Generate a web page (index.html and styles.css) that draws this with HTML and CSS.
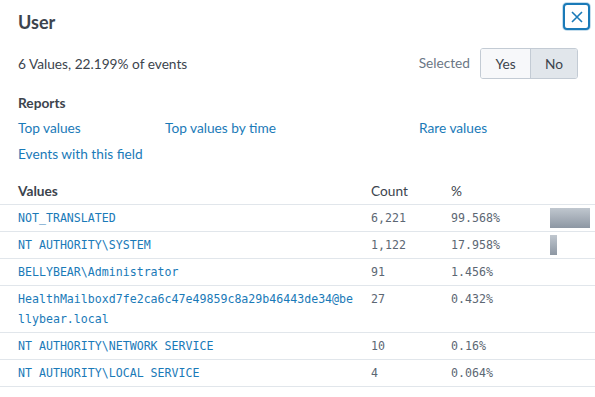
FILE: index.html
```html
<!DOCTYPE html>
<html lang="en">
<head>
  <meta charset="UTF-8">
  <title>User</title>
  <link rel="stylesheet" href="styles.css">
</head>
<body>

  <div class="head">
    <h2 class="title">User</h2>
    <button class="close-btn" aria-label="Close">
      <svg width="12" height="12" viewBox="0 0 12 12">
        <path d="M1 1 L11 11 M11 1 L1 11" stroke="#1a7ab8" stroke-width="1.6" fill="none"/>
      </svg>
    </button>
  </div>

  <div class="summary">
    <div class="summary-text">6 Values, 22.199% of events</div>
    <div class="selected">
      <span class="selected-label">Selected</span>
      <div class="toggle">
        <button class="toggle-btn">Yes</button>
        <button class="toggle-btn on">No</button>
      </div>
    </div>
  </div>

  <h3 class="section">Reports</h3>
  <div class="reports">
    <a href="#">Top values</a>
    <a href="#">Top values by time</a>
    <a href="#">Rare values</a>
    <a href="#">Events with this field</a>
  </div>

  <table class="values">
    <thead>
      <tr>
        <th class="col-val">Values</th>
        <th class="col-count">Count</th>
        <th class="col-pct">%</th>
        <th class="col-bar"></th>
      </tr>
    </thead>
    <tbody>
      <tr>
        <td class="val">NOT_TRANSLATED</td>
        <td class="num">6,221</td>
        <td class="num">99.568%</td>
        <td class="bar-cell"><div class="bar" style="width: 40px;"></div></td>
      </tr>
      <tr>
        <td class="val">NT AUTHORITY\SYSTEM</td>
        <td class="num">1,122</td>
        <td class="num">17.958%</td>
        <td class="bar-cell"><div class="bar" style="width: 7px;"></div></td>
      </tr>
      <tr>
        <td class="val">BELLYBEAR\Administrator</td>
        <td class="num">91</td>
        <td class="num">1.456%</td>
        <td class="bar-cell"></td>
      </tr>
      <tr>
        <td class="val">HealthMailboxd7fe2ca6c47e49859c8a29b46443de34@bellybear.local</td>
        <td class="num">27</td>
        <td class="num">0.432%</td>
        <td class="bar-cell"></td>
      </tr>
      <tr>
        <td class="val">NT AUTHORITY\NETWORK SERVICE</td>
        <td class="num">10</td>
        <td class="num">0.16%</td>
        <td class="bar-cell"></td>
      </tr>
      <tr>
        <td class="val">NT AUTHORITY\LOCAL SERVICE</td>
        <td class="num">4</td>
        <td class="num">0.064%</td>
        <td class="bar-cell"></td>
      </tr>
    </tbody>
  </table>

</body>
</html>
```

FILE: styles.css
```css
body {
  margin: 0;
  padding: 0;
  background-color: #fff;
  color: #3c444d;
  font-family: Lato, "Open Sans", sans-serif;
  font-size: 13.7px;
}

.head {
  display: flex;
  justify-content: space-between;
  align-items: flex-start;
  padding: 0 5px 0 18px;
}

.title {
  margin: 10px 0 0;
  font-size: 18px;
  font-weight: 700;
  line-height: 24px;
}

.close-btn {
  margin-top: 3px;
  width: 27px;
  height: 27px;
  border: 2px solid #1a7ab8;
  border-radius: 4px;
  background: #fff;
  display: flex;
  align-items: center;
  justify-content: center;
  padding: 0;
  box-shadow: 0 0 0 1px rgba(26, 122, 184, 0.25);
}

.summary {
  display: flex;
  justify-content: space-between;
  align-items: center;
  margin-top: 14px;
  padding: 0 17px 0 18px;
}

.selected {
  display: flex;
  align-items: center;
}

.selected-label {
  color: #6b7785;
  margin-right: 10px;
  margin-top: -3px;
}

.toggle {
  display: flex;
  border: 1px solid #c3cbd4;
  border-radius: 3px;
  overflow: hidden;
}

.toggle-btn {
  height: 29px;
  border: none;
  background-color: #f7f8fa;
  color: #3c444d;
  font-family: inherit;
  font-size: 13.7px;
  padding: 0;
  width: 49px;
}

.toggle-btn + .toggle-btn {
  border-left: 1px solid #c3cbd4;
  width: 47px;
}

.toggle-btn.on {
  background-color: #e1e6eb;
}

.section {
  margin: 15px 0 0;
  padding-left: 18px;
  font-size: 13.7px;
  font-weight: 700;
  line-height: 18px;
}

.reports {
  display: grid;
  grid-template-columns: 147px 254px auto;
  grid-auto-rows: 26px;
  align-items: center;
  margin-top: 2px;
  padding-left: 18px;
}

.reports a {
  color: #1a7ab8;
  text-decoration: none;
}

.values {
  width: 100%;
  margin-top: 11px;
  border-collapse: collapse;
}

.values th {
  text-align: left;
  font-weight: 700;
  padding: 4px 0 3px;
  line-height: 20px;
  border-bottom: 1px solid #e1e6eb;
}

.values td {
  padding: 3px 0;
  line-height: 20px;
  vertical-align: top;
  border-bottom: 1px solid #e1e6eb;
  font-family: "DejaVu Sans Mono", monospace;
  font-size: 11.6px;
}

.values th.col-val,
.values td.val {
  padding-left: 18px;
  padding-right: 16px;
}

.values th.col-count,
.values th.col-pct {
  font-weight: 400;
}

.col-count {
  width: 80px;
}

.col-pct {
  width: 99px;
}

.col-bar {
  width: 40px;
  padding-right: 5px !important;
}

.val {
  color: #1a7ab8;
  word-break: break-all;
}

.num {
  color: #5c6773;
}

.bar-cell {
  padding-right: 5px !important;
}

.bar {
  height: 20px;
  background: linear-gradient(#c0c7cf, #8d97a3);
}
```
